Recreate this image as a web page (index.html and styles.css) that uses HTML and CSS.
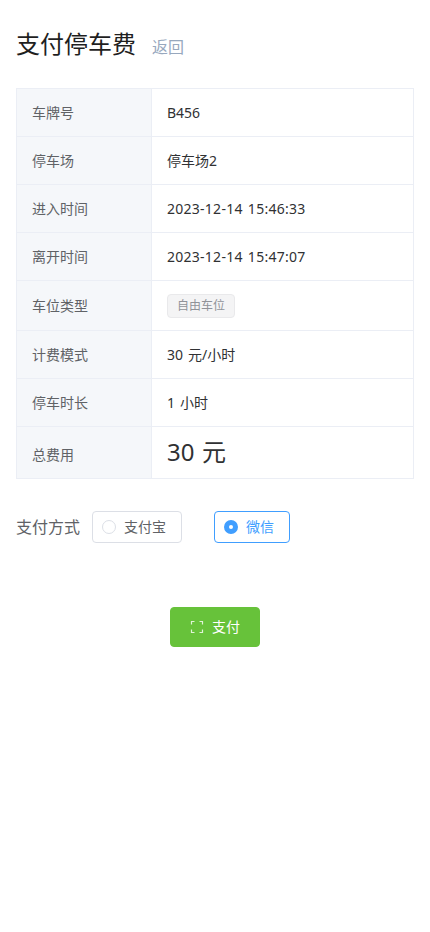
FILE: index.html
```html
<!DOCTYPE html>
<html lang="zh-CN">
<head>
<meta charset="utf-8">
<title>支付停车费</title>
<link rel="stylesheet" href="styles.css">
</head>
<body>
<main class="page">
  <header class="head">
    <h1 class="title">支付停车费</h1>
    <a class="back">返回</a>
  </header>
  <div class="desc">
    <div class="row"><div class="label">车牌号</div><div class="value">B456</div></div>
    <div class="row"><div class="label">停车场</div><div class="value">停车场2</div></div>
    <div class="row"><div class="label">进入时间</div><div class="value stamp">2023-12-14 15:46:33</div></div>
    <div class="row"><div class="label">离开时间</div><div class="value stamp">2023-12-14 15:47:07</div></div>
    <div class="row"><div class="label">车位类型</div><div class="value"><span class="tag">自由车位</span></div></div>
    <div class="row"><div class="label">计费模式</div><div class="value">30 元/小时</div></div>
    <div class="row"><div class="label">停车时长</div><div class="value">1 小时</div></div>
    <div class="row"><div class="label">总费用</div><div class="value total">30 元</div></div>
  </div>
  <div class="method">
    <span class="method-label">支付方式</span>
    <div class="radio"><span class="dot"></span><span>支付宝</span></div>
    <div class="radio on"><span class="dot"></span><span>微信</span></div>
  </div>
  <div class="actions">
    <button class="pay" type="button">
      <svg class="scan" width="14" height="14" viewBox="0 0 14 14" fill="none" stroke="#fff" stroke-opacity=".8" stroke-width="1.2"><path d="M1.500 4.500V1.500H4.500M9.500 1.500H12.500V4.500M12.500 9.500V12.500H9.500M4.500 12.500H1.500V9.500"/></svg>
      <span>支付</span>
    </button>
  </div>
</main>
</body>
</html>
```
FILE: styles.css
```css
* { box-sizing: border-box; }
html, body { margin: 0; background: #fff; }
body {
  font-family: "Noto Sans", "Noto Sans CJK SC", sans-serif;
  color: #303133;
  line-height: 20px;
  word-spacing: .08em;
}
.page { padding: 26px 16px 0; height: 932px; }
.head { display: flex; align-items: baseline; height: 36px; margin-bottom: 26px; }
.title { margin: 0; font-size: 24px; font-weight: 400; line-height: 36px; color: #1f1f1f; }
.back { margin-left: 16px; font-size: 16px; color: #97a8be; }
.desc { border: 1px solid #ebeef5; border-bottom: 0; width: 398px; }
.row { display: grid; grid-template-columns: 135px 1fr; border-bottom: 1px solid #ebeef5; min-height: 48px; }
.label {
  display: flex; align-items: center; padding: 0 15px;
  background: #f5f7fa; color: #606266; font-size: 14px;
  border-right: 1px solid #ebeef5;
}
.value { display: flex; align-items: center; padding: 0 15px; font-size: 14px; color: #303133; }
.stamp { letter-spacing: .26px; }
.row:nth-child(5) { height: 50px; }
.row:nth-child(8) { height: 52px; }
.row:nth-child(8) .label { padding-top: 4px; }
.total { font-size: 24px; line-height: 32px; padding-bottom: 2px; }
.tag {
  display: inline-flex; align-items: center; height: 24px; padding: 0 9px;
  font-size: 12px; color: #909399; background: #f4f4f5;
  border: 1px solid #e9e9eb; border-radius: 4px;
}
.method { display: flex; align-items: center; margin-top: 32px; height: 32px; }
.method-label { font-size: 16px; color: #606266; margin-right: 12px; white-space: nowrap; }
.radio {
  display: flex; align-items: center; gap: 8px; height: 32px; padding: 0 15px 0 9px;
  border: 1px solid #dcdfe6; border-radius: 4px; font-size: 14px; color: #606266;
}
.radio + .radio { margin-left: 32px; }
.dot { width: 14px; height: 14px; border-radius: 50%; border: 1px solid #dcdfe6; background: #fff; }
.radio.on { border-color: #409eff; color: #409eff; }
.on .dot { border: 5px solid #409eff; }
.actions { display: flex; justify-content: center; margin-top: 64px; }
.pay {
  display: flex; align-items: center; justify-content: center; gap: 8px;
  width: 90px; height: 40px; padding: 0;
  background: #67c23a; border: 1px solid #67c23a; border-radius: 4px;
  color: #fff; font: inherit; font-size: 14px;
}
```
